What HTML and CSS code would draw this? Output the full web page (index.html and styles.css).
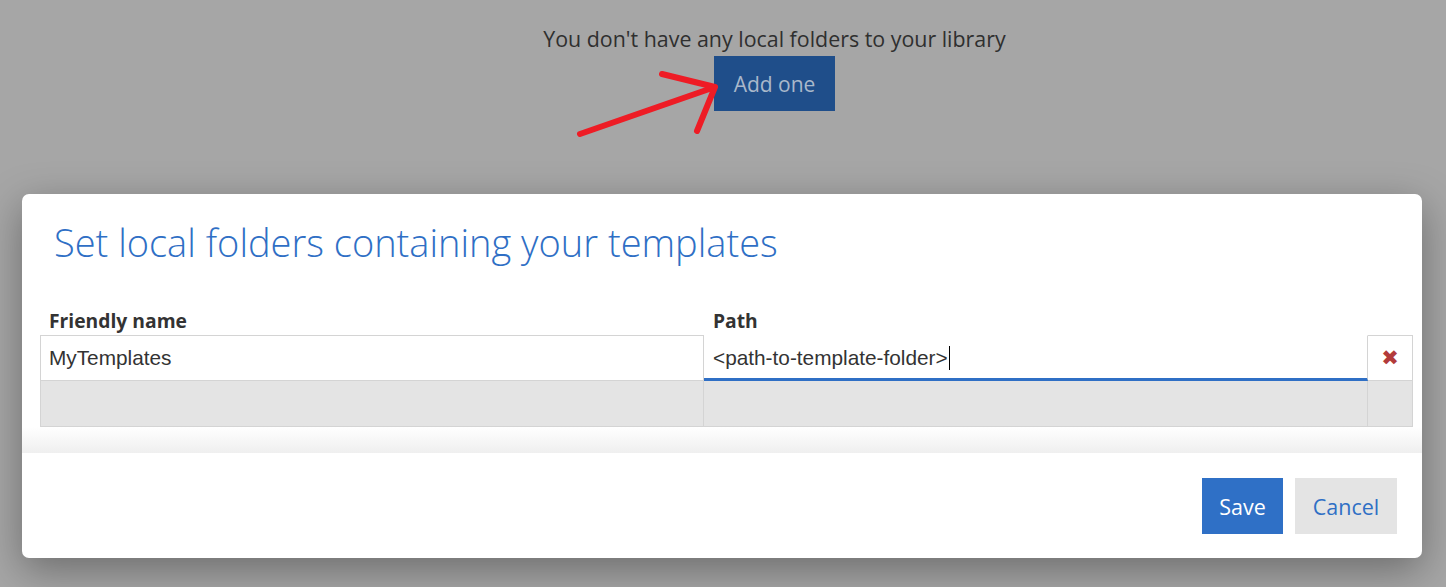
FILE: index.html
```html
<!DOCTYPE html>
<html>
<head>
<meta charset="utf-8">
<link rel="stylesheet" href="styles.css">
</head>
<body>
<div class="page">
  <div class="empty">
    <p class="empty-text">You don't have any local folders to your library</p>
    <button class="add-btn">Add one</button>
    <svg class="arrow" width="160" height="80" viewBox="560 60 160 80">
      <path d="M580 134 L715 87 M662 74 L715 87 L697 131" fill="none" stroke="#ee1c25" stroke-width="6" stroke-linecap="round" stroke-linejoin="round"/>
    </svg>
  </div>
  <div class="modal">
    <div class="modal-body">
      <h1 class="title">Set local folders containing your templates</h1>
      <div class="grid">
        <div class="head">Friendly name</div>
        <div class="head">Path</div>
        <div class="head"></div>
        <div class="cell">MyTemplates</div>
        <div class="cell cell-active">&lt;path-to-template-folder&gt;<span class="caret"></span></div>
        <div class="cell cell-del"><span class="del">✖</span></div>
        <div class="cell cell-new"></div>
        <div class="cell cell-new"></div>
        <div class="cell cell-new"></div>
      </div>
      <div class="fade"></div>
    </div>
    <div class="modal-foot">
      <button class="btn btn-primary">Save</button>
      <button class="btn btn-secondary">Cancel</button>
    </div>
  </div>
</div>
</body>
</html>
```

FILE: styles.css
```css
html, body {
  margin: 0;
  padding: 0;
}
body {
  background: #a6a6a6;
  font-family: "Open Sans", "Noto Sans", sans-serif;
  width: 1446px;
  height: 587px;
  overflow: hidden;
}
.page {
  display: flex;
  flex-direction: column;
}
.empty {
  position: relative;
  display: flex;
  flex-direction: column;
  align-items: center;
  padding-top: 24px;
  padding-left: 103px;
  height: 168px;
  box-sizing: border-box;
}
.empty-text {
  margin: 0;
  font-size: 21.4px;
  line-height: 30px;
  color: #2f2f2f;
}
.add-btn {
  margin-top: 2px;
  border: none;
  background: #1f4e8a;
  color: #a9b8ca;
  font-family: "Open Sans", "Noto Sans", sans-serif;
  font-size: 21px;
  width: 121px;
  height: 55px;
  padding: 0;
}
.arrow {
  position: absolute;
  left: 560px;
  top: 60px;
}
.modal {
  margin-left: 22px;
  width: 1400px;
  height: 364px;
  margin-top: 26px;
  background: #fff;
  border-radius: 7px;
  box-shadow: 0 12px 40px rgba(0, 0, 0, 0.35);
  display: flex;
  flex-direction: column;
  overflow: hidden;
}
.modal-body {
  padding: 0 8px 0 18px;
  display: flex;
  flex-direction: column;
}
.title {
  margin: 20px 0 0 14px;
  font-weight: 300;
  font-size: 38px;
  line-height: 56px;
  color: #2f6fc5;
}
.grid {
  margin-top: 38px;
  display: grid;
  grid-template-columns: 664px 664px 45px;
}
.head {
  font-weight: 700;
  font-size: 19.3px;
  color: #333;
  line-height: 26px;
  padding: 0 0 1px 9px;
}
.cell {
  height: 46px;
  box-sizing: border-box;
  border-right: 1px solid #d4d4d4;
  border-bottom: 1px solid #d4d4d4;
  font-family: "Liberation Sans", Arial, sans-serif;
  font-size: 20.8px;
  color: #333;
  padding: 0 8px;
  display: flex;
  align-items: center;
}
.grid > .cell:nth-child(4),
.grid > .cell:nth-child(7) {
  border-left: 1px solid #d4d4d4;
}
.grid > .cell:nth-child(4),
.grid > .cell:nth-child(5),
.grid > .cell:nth-child(6) {
  border-top: 1px solid #d4d4d4;
}
.grid > .cell:nth-child(5) {
  border-top-color: #fff;
}
.cell-active {
  border-bottom: 3px solid #2f6fc5;
  padding: 2px 9px 0;
}
.caret {
  display: inline-block;
  width: 1px;
  height: 24px;
  background: #000;
  margin-left: 1px;
}
.cell-del {
  justify-content: center;
  padding: 0;
}
.del {
  color: #b23b3b;
  font-family: "DejaVu Sans", sans-serif;
  font-size: 21px;
}
.cell-new {
  background: #e4e4e4;
}
.fade {
  height: 26px;
  margin: 0 -8px 0 -18px;
  background: linear-gradient(#fff, #efefef);
}
.modal-foot {
  display: flex;
  justify-content: flex-end;
  gap: 12px;
  padding: 25px 25px 0 0;
}
.btn {
  height: 56px;
  border: none;
  font-family: "Open Sans", "Noto Sans", sans-serif;
  font-size: 21.5px;
  padding: 0;
}
.btn-primary {
  width: 81px;
  background: #2f70c6;
  color: #fff;
}
.btn-secondary {
  width: 102px;
  background: #e4e4e4;
  color: #2f6fc5;
}
```
